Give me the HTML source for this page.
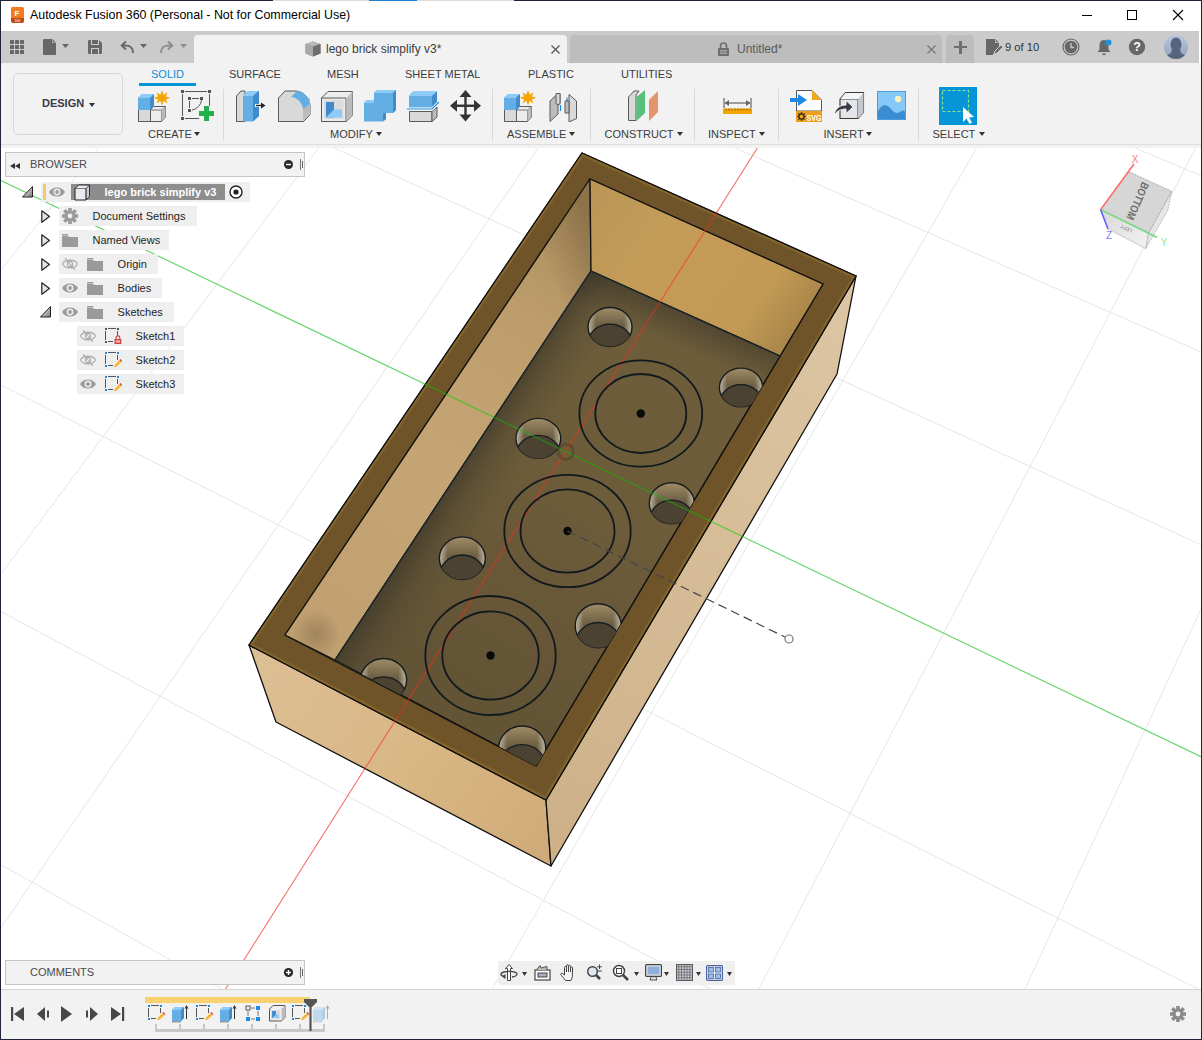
<!DOCTYPE html>
<html><head><meta charset="utf-8"><style>*{margin:0;padding:0;box-sizing:border-box}
html,body{width:1202px;height:1040px;overflow:hidden;background:#fff;font-family:"Liberation Sans",sans-serif;position:relative}
.a{position:absolute;display:block}
.t{position:absolute;white-space:nowrap;line-height:1}
#frame{position:absolute;left:0;top:0;width:1202px;height:1040px;border:1px solid #1e2538;pointer-events:none}
</style></head><body>
<svg class="a" style="left:0;top:0" width="1202" height="1040" viewBox="0 0 1202 1040">
<defs><clipPath id="vp"><rect x="1" y="148" width="1200" height="841"/></clipPath>

<linearGradient id="gLeft" x1="249" y1="644" x2="551" y2="866" gradientUnits="userSpaceOnUse">
<stop offset="0" stop-color="#dcbf95"/><stop offset="0.5" stop-color="#d9b886"/><stop offset="1" stop-color="#cfaa78"/></linearGradient>
<linearGradient id="gRight" x1="560" y1="860" x2="850" y2="300" gradientUnits="userSpaceOnUse">
<stop offset="0" stop-color="#cdb088"/><stop offset="0.5" stop-color="#d5bc96"/><stop offset="1" stop-color="#dcc5a3"/></linearGradient>
<linearGradient id="gBR" x1="590" y1="180" x2="800" y2="330" gradientUnits="userSpaceOnUse">
<stop offset="0" stop-color="#b99556"/><stop offset="0.35" stop-color="#c49c58"/><stop offset="0.8" stop-color="#c29a55"/><stop offset="1" stop-color="#a88548"/></linearGradient>
<linearGradient id="gBL" x1="590" y1="200" x2="300" y2="640" gradientUnits="userSpaceOnUse">
<stop offset="0" stop-color="#a98b5b"/><stop offset="0.25" stop-color="#bd9d6c"/><stop offset="0.6" stop-color="#c6a575"/><stop offset="1" stop-color="#c09f70"/></linearGradient>
<linearGradient id="gBLcorner" x1="590" y1="230" x2="540" y2="250" gradientUnits="userSpaceOnUse"><stop offset="0" stop-color="#5a4528" stop-opacity="0.35"/><stop offset="1" stop-color="#5a4528" stop-opacity="0"/></linearGradient>
<radialGradient id="gBLspot" cx="316" cy="634" r="24" gradientUnits="userSpaceOnUse"><stop offset="0" stop-color="#5a4a30" stop-opacity="0.32"/><stop offset="1" stop-color="#5a4a30" stop-opacity="0"/></radialGradient>
<linearGradient id="gFloor" x1="500" y1="700" x2="720" y2="330" gradientUnits="userSpaceOnUse">
<stop offset="0" stop-color="#635436"/><stop offset="0.5" stop-color="#6d5c3a"/><stop offset="1" stop-color="#6e5d3b"/></linearGradient>
<linearGradient id="gFsh1" x1="463" y1="465.5" x2="505" y2="493" gradientUnits="userSpaceOnUse">
<stop offset="0" stop-color="#2e2c24" stop-opacity="0.5"/><stop offset="0.45" stop-color="#2e2c24" stop-opacity="0.18"/><stop offset="1" stop-color="#2e2c24" stop-opacity="0"/></linearGradient>
<linearGradient id="gFsh2" x1="685.5" y1="313.5" x2="672" y2="345" gradientUnits="userSpaceOnUse">
<stop offset="0" stop-color="#2e2c24" stop-opacity="0.45"/><stop offset="1" stop-color="#2e2c24" stop-opacity="0"/></linearGradient>
<linearGradient id="gHoleWall" x1="0" y1="0" x2="0" y2="1"><stop offset="0" stop-color="#a08c66"/><stop offset="0.45" stop-color="#6d5f44"/><stop offset="1" stop-color="#6f6146"/></linearGradient>
<linearGradient id="gHoleEdge" x1="0" y1="0" x2="1" y2="0"><stop offset="0" stop-color="#dcd6c4" stop-opacity="0.75"/><stop offset="0.18" stop-color="#dcd6c4" stop-opacity="0"/><stop offset="0.82" stop-color="#dcd6c4" stop-opacity="0"/><stop offset="1" stop-color="#dcd6c4" stop-opacity="0.75"/></linearGradient>
<radialGradient id="gOrig" cx="566" cy="452" r="10" gradientUnits="userSpaceOnUse"><stop offset="0" stop-color="#4a4030" stop-opacity="0.7"/><stop offset="0.7" stop-color="#4a4030" stop-opacity="0.6"/><stop offset="1" stop-color="#4a4030" stop-opacity="0"/></radialGradient>
</defs>
<g clip-path="url(#vp)">
<g stroke="#e6e6e6" stroke-width="1" fill="none">
<line x1="98.8" y1="148.0" x2="1.0" y2="269.9"/>
<line x1="318.5" y1="148.0" x2="1.0" y2="573.8"/>
<line x1="538.0" y1="148.0" x2="1.0" y2="927.5"/>
<line x1="757.4" y1="148.0" x2="225.5" y2="989.0"/>
<line x1="976.6" y1="148.0" x2="492.3" y2="989.0"/>
<line x1="1195.6" y1="148.0" x2="758.8" y2="989.0"/>
<line x1="1201.0" y1="609.0" x2="1025.0" y2="989.0"/>
<line x1="1134.8" y1="148.0" x2="1201.0" y2="175.7"/>
<line x1="734.9" y1="148.0" x2="1201.0" y2="352.0"/>
<line x1="334.4" y1="148.0" x2="1201.0" y2="544.8"/>
<line x1="1.0" y1="180.5" x2="1201.0" y2="756.7"/>
<line x1="1.0" y1="384.9" x2="1198.0" y2="989.0"/>
<line x1="1.0" y1="611.7" x2="710.3" y2="989.0"/>
<line x1="1.0" y1="864.8" x2="221.9" y2="989.0"/>
</g>
<g stroke="#111" stroke-width="1.3" stroke-linejoin="round">
<polygon points="249,645 546,800 551,866 276,722" fill="url(#gLeft)"/>
<polygon points="546,800 856,276 837,374 551,866" fill="url(#gRight)"/>
<path fill-rule="evenodd" fill="#6e5428" d="M582,153 L856,276 L546,800 L249,645 Z M590,179 L285,635 L536,766 L823,284 Z"/>
<clipPath id="rimclip"><polygon points="582,153 856,276 546,800 249,645"/></clipPath>
<g clip-path="url(#rimclip)" fill="none" stroke="#a07c34" stroke-linejoin="miter"><polygon points="582,153 856,276 546,800 249,645" stroke-width="6" stroke-opacity="0.35"/><polygon points="582,153 856,276 546,800 249,645" stroke-width="3" stroke-opacity="0.5"/></g>
<polygon points="582,153 856,276 546,800 249,645" fill="none" stroke="#111" stroke-width="1.3"/>
<polygon points="285,635 590,179 591,271 335,660" fill="url(#gBL)"/>
<polygon points="285,635 590,179 591,271 335,660" fill="url(#gBLspot)" stroke="none"/>
<polygon points="285,635 590,179 591,271 335,660" fill="url(#gBLcorner)" stroke="none"/>
<polygon points="590,179 823,284 780,356 591,271" fill="url(#gBR)"/>
<polygon points="591,271 780,356 536,766 335,660" fill="url(#gFloor)"/>
<polygon points="591,271 780,356 536,766 335,660" fill="url(#gFsh1)" stroke="none"/>
<polygon points="591,271 780,356 536,766 335,660" fill="url(#gFsh2)" stroke="none"/>
<path d="M335,660 L591,271 L780,356" fill="none" stroke="#1c2a30" stroke-width="1.2"/>
</g>
<clipPath id="floorclip"><polygon points="591,271 780,356 536,766 335,660"/></clipPath>
<g clip-path="url(#floorclip)">
<ellipse cx="610" cy="327" rx="22" ry="19.5" fill="url(#gHoleWall)"/>
<ellipse cx="610" cy="327" rx="22" ry="19.5" fill="url(#gHoleEdge)" stroke="#141c20" stroke-width="1.4"/>
<clipPath id="hc610"><ellipse cx="610" cy="327" rx="22" ry="19.5"/></clipPath>
<ellipse clip-path="url(#hc610)" cx="610" cy="343.6" rx="22" ry="19.5" fill="#4b4232" stroke="#141c20" stroke-width="1.3"/>
<ellipse cx="741" cy="387.5" rx="21.6" ry="19.4" fill="url(#gHoleWall)"/>
<ellipse cx="741" cy="387.5" rx="21.6" ry="19.4" fill="url(#gHoleEdge)" stroke="#141c20" stroke-width="1.4"/>
<clipPath id="hc741"><ellipse cx="741" cy="387.5" rx="21.6" ry="19.4"/></clipPath>
<ellipse clip-path="url(#hc741)" cx="741" cy="404.0" rx="21.6" ry="19.4" fill="#4b4232" stroke="#141c20" stroke-width="1.3"/>
<ellipse cx="538.3" cy="438.4" rx="22.4" ry="20" fill="url(#gHoleWall)"/>
<ellipse cx="538.3" cy="438.4" rx="22.4" ry="20" fill="url(#gHoleEdge)" stroke="#141c20" stroke-width="1.4"/>
<clipPath id="hc538"><ellipse cx="538.3" cy="438.4" rx="22.4" ry="20"/></clipPath>
<ellipse clip-path="url(#hc538)" cx="538.3" cy="455.4" rx="22.4" ry="20" fill="#4b4232" stroke="#141c20" stroke-width="1.3"/>
<ellipse cx="671.8" cy="503.3" rx="22.5" ry="20.5" fill="url(#gHoleWall)"/>
<ellipse cx="671.8" cy="503.3" rx="22.5" ry="20.5" fill="url(#gHoleEdge)" stroke="#141c20" stroke-width="1.4"/>
<clipPath id="hc671"><ellipse cx="671.8" cy="503.3" rx="22.5" ry="20.5"/></clipPath>
<ellipse clip-path="url(#hc671)" cx="671.8" cy="520.7" rx="22.5" ry="20.5" fill="#4b4232" stroke="#141c20" stroke-width="1.3"/>
<ellipse cx="462.3" cy="558.2" rx="23" ry="21.3" fill="url(#gHoleWall)"/>
<ellipse cx="462.3" cy="558.2" rx="23" ry="21.3" fill="url(#gHoleEdge)" stroke="#141c20" stroke-width="1.4"/>
<clipPath id="hc462"><ellipse cx="462.3" cy="558.2" rx="23" ry="21.3"/></clipPath>
<ellipse clip-path="url(#hc462)" cx="462.3" cy="576.3" rx="23" ry="21.3" fill="#4b4232" stroke="#141c20" stroke-width="1.3"/>
<ellipse cx="598.2" cy="625.8" rx="23" ry="22" fill="url(#gHoleWall)"/>
<ellipse cx="598.2" cy="625.8" rx="23" ry="22" fill="url(#gHoleEdge)" stroke="#141c20" stroke-width="1.4"/>
<clipPath id="hc598"><ellipse cx="598.2" cy="625.8" rx="23" ry="22"/></clipPath>
<ellipse clip-path="url(#hc598)" cx="598.2" cy="644.5" rx="23" ry="22" fill="#4b4232" stroke="#141c20" stroke-width="1.3"/>
<ellipse cx="383.6" cy="680" rx="23" ry="21.5" fill="url(#gHoleWall)"/>
<ellipse cx="383.6" cy="680" rx="23" ry="21.5" fill="url(#gHoleEdge)" stroke="#141c20" stroke-width="1.4"/>
<clipPath id="hc383"><ellipse cx="383.6" cy="680" rx="23" ry="21.5"/></clipPath>
<ellipse clip-path="url(#hc383)" cx="383.6" cy="698.3" rx="23" ry="21.5" fill="#4b4232" stroke="#141c20" stroke-width="1.3"/>
<ellipse cx="522.2" cy="748" rx="23.5" ry="22" fill="url(#gHoleWall)"/>
<ellipse cx="522.2" cy="748" rx="23.5" ry="22" fill="url(#gHoleEdge)" stroke="#141c20" stroke-width="1.4"/>
<clipPath id="hc522"><ellipse cx="522.2" cy="748" rx="23.5" ry="22"/></clipPath>
<ellipse clip-path="url(#hc522)" cx="522.2" cy="766.7" rx="23.5" ry="22" fill="#4b4232" stroke="#141c20" stroke-width="1.3"/>
</g>
<line x1="757.4" y1="148.0" x2="225.5" y2="989.0" stroke="#ff2a1a" stroke-opacity="0.62" stroke-width="1.1"/>
<line x1="1.0" y1="180.5" x2="1201.0" y2="756.7" stroke="#00c800" stroke-opacity="0.55" stroke-width="1.2"/>
<g fill="none" stroke="#101a1e" stroke-width="1.8">
<ellipse cx="640.8" cy="413.5" rx="61.4" ry="53.2"/>
<ellipse cx="640.8" cy="413.5" rx="45.5" ry="39.5"/>
<ellipse cx="567.5" cy="531" rx="63.2" ry="56.2"/>
<ellipse cx="567.5" cy="531" rx="47" ry="41.7"/>
<ellipse cx="490.5" cy="655.5" rx="65.2" ry="59.5"/>
<ellipse cx="490.5" cy="655.5" rx="48.2" ry="44.2"/>
</g>
<circle cx="640.8" cy="413.5" r="4.2" fill="#0a0a0a"/>
<circle cx="567.5" cy="531" r="4.2" fill="#0a0a0a"/>
<circle cx="490.5" cy="655.5" r="4.2" fill="#0a0a0a"/>
<line x1="567.5" y1="531" x2="785.5" y2="637.3" stroke="#444" stroke-width="1.2" stroke-dasharray="9,5"/>
<circle cx="789" cy="639" r="4" fill="#fff" stroke="#777" stroke-width="1.2"/>
<circle cx="565.8" cy="451.8" r="7.6" fill="none" stroke="#4a3e2a" stroke-opacity="0.55" stroke-width="2.6"/>
</g></svg>
<svg class="a" style="left:0;top:0" width="1202" height="1040">
<defs><linearGradient id="vcf" x1="0" y1="0" x2="1" y2="1"><stop offset="0" stop-color="#d8d8d8"/><stop offset="1" stop-color="#f2f2f2"/></linearGradient></defs>
<polygon points="1100.6,209.6 1148.7,232.7 1145.8,248.6 1108,229" fill="url(#vcf)" stroke="#888" stroke-width="0.6" stroke-dasharray="2,1"/>
<polygon points="1148.7,232.7 1171.7,191.3 1168,210 1145.8,248.6" fill="#e6e6e6" stroke="#999" stroke-width="0.6" stroke-dasharray="2,1"/>
<polygon points="1100.6,209.6 1128.5,171.6 1171.7,191.3 1148.7,232.7" fill="#d6d6d6" stroke="#888" stroke-width="0.6" stroke-dasharray="2,1"/>
<text x="0" y="0" transform="translate(1134.2,199.5) rotate(114)" font-family="Liberation Sans" font-weight="bold" font-size="11" fill="#6e6e6e" text-anchor="middle" textLength="40" lengthAdjust="spacingAndGlyphs">BOTTOM</text>
<text x="0" y="0" transform="translate(1127,227) rotate(-155)" font-family="Liberation Sans" font-size="5" fill="#777" text-anchor="middle">LEFT</text>
<line x1="1100.6" y1="209.6" x2="1134" y2="164" stroke="#ff6a6a" stroke-width="1.6"/>
<line x1="1100.6" y1="209.6" x2="1157" y2="237.5" stroke="#7ada7a" stroke-width="1.6"/>
<line x1="1100.6" y1="209.6" x2="1108" y2="229" stroke="#6666ff" stroke-width="1.6"/>
<text x="1135" y="163" font-family="Liberation Sans" font-size="10" fill="#ff7a7a" text-anchor="middle">X</text>
<text x="1164" y="246" font-family="Liberation Sans" font-size="10" fill="#8de88d" text-anchor="middle">Y</text>
<text x="1109" y="239" font-family="Liberation Sans" font-size="10" fill="#8080ff" text-anchor="middle">Z</text>
</svg>
<div class="a" style="left:5px;top:152px;width:300px;height:25px;background:#f2f2f2;border:1px solid #c6c6c6;box-sizing:border-box"></div>
<svg class="a" style="left:10px;top:163px" width="11" height="6" viewBox="0 0 11 6"><polygon points="0,3 5,0 5,6" fill="#333"/><polygon points="5,3 10,0 10,6" fill="#333"/></svg>
<div class="t" style="left:30px;top:158.71px;font-size:11px;color:#4a4a4a;">BROWSER</div>
<svg class="a" style="left:283px;top:159px" width="11" height="11" viewBox="0 0 11 11"><circle cx="5.5" cy="5.5" r="4.5" fill="#2a2a2a"/><rect x="3" y="4.8" width="5" height="1.4" fill="#fff"/></svg>
<div class="a" style="left:300px;top:159px;width:1px;height:11px;background:#777;"></div>
<div class="a" style="left:302px;top:161px;width:1px;height:7px;background:#666;"></div>
<div class="a" style="left:41px;top:182px;width:209px;height:20px;background:#efefef;"></div>
<svg class="a" style="left:22px;top:186px" width="12" height="12" viewBox="0 0 12 12"><defs><linearGradient id="tg" x1="0" y1="0" x2="1" y2="1"><stop offset="0" stop-color="#fff"/><stop offset="1" stop-color="#777"/></linearGradient></defs><path d="M0.5,11 L10.5,0.5 V11z" fill="url(#tg)" stroke="#222" stroke-width="1" stroke-linejoin="round"/></svg>
<div class="a" style="left:43px;top:184px;width:3px;height:16px;background:#f9c86a;"></div>
<svg class="a" style="left:49px;top:186px" width="16" height="12" viewBox="0 0 16 12"><path d="M0,6 C3,0 13,0 16,6 C13,12 3,12 0,6z" fill="#9c9c9c"/><circle cx="8" cy="6" r="3.4" fill="#eeeeee"/><circle cx="8" cy="6" r="1.9" fill="#9c9c9c"/></svg>
<div class="a" style="left:71px;top:184px;width:154px;height:16px;background:#8d8d8d;"></div>
<svg class="a" style="left:74px;top:184px" width="17" height="17" viewBox="0 0 17 17"><path d="M1,4.5 L4.5,1 H15.5 V12.5 L12,16 H1z" fill="#e8eaf0" stroke="#222" stroke-width="1"/><path d="M12,4.5 L15.5,1 V12.5 L12,16z" fill="#c8ccd4" stroke="#222" stroke-width="0.8"/><path d="M1,4.5 H12 V16" fill="none" stroke="#333" stroke-width="0.6"/></svg>
<div class="t" style="left:104.5px;top:186.71px;font-size:11px;color:#fff;font-weight:bold;">lego brick simplify v3</div>
<svg class="a" style="left:229px;top:185px" width="14" height="14" viewBox="0 0 14 14"><circle cx="7" cy="7" r="6" fill="#fff" stroke="#222" stroke-width="1.4"/><circle cx="7" cy="7" r="2.6" fill="#222"/></svg>
<div class="a" style="left:59px;top:206px;width:138px;height:20px;background:#efefef;"></div>
<svg class="a" style="left:41px;top:209.5px" width="10" height="13" viewBox="0 0 10 13"><path d="M0.8,0.8 L8.5,6.5 L0.8,12.2z" fill="#e4e4e4" stroke="#222" stroke-width="1.2" stroke-linejoin="round"/></svg>
<svg class="a" style="left:62px;top:208px" width="16" height="16" viewBox="0 0 16 16"><g fill="#9a9a9a" transform="translate(8,8)"><rect x="-1.8" y="-8" width="3.6" height="4" transform="rotate(0)"/><rect x="-1.8" y="-8" width="3.6" height="4" transform="rotate(45)"/><rect x="-1.8" y="-8" width="3.6" height="4" transform="rotate(90)"/><rect x="-1.8" y="-8" width="3.6" height="4" transform="rotate(135)"/><rect x="-1.8" y="-8" width="3.6" height="4" transform="rotate(180)"/><rect x="-1.8" y="-8" width="3.6" height="4" transform="rotate(225)"/><rect x="-1.8" y="-8" width="3.6" height="4" transform="rotate(270)"/><rect x="-1.8" y="-8" width="3.6" height="4" transform="rotate(315)"/><circle r="5.6"/></g><circle cx="8" cy="8" r="2.4" fill="#efefef"/></svg>
<div class="t" style="left:92.5px;top:210.71px;font-size:11px;color:#1e1e1e;">Document Settings</div>
<div class="a" style="left:59px;top:230px;width:110px;height:20px;background:#efefef;"></div>
<svg class="a" style="left:41px;top:233.5px" width="10" height="13" viewBox="0 0 10 13"><path d="M0.8,0.8 L8.5,6.5 L0.8,12.2z" fill="#e4e4e4" stroke="#222" stroke-width="1.2" stroke-linejoin="round"/></svg>
<svg class="a" style="left:62px;top:233.5px" width="16" height="13" viewBox="0 0 16 13"><path d="M0,1.5 H6 L7,3 H16 V13 H0z" fill="#9a9a9a"/><rect x="0" y="0" width="6" height="1" fill="#9a9a9a"/></svg>
<div class="t" style="left:92.5px;top:234.71px;font-size:11px;color:#1e1e1e;">Named Views</div>
<div class="a" style="left:59px;top:254px;width:99px;height:20px;background:#efefef;"></div>
<svg class="a" style="left:41px;top:257.5px" width="10" height="13" viewBox="0 0 10 13"><path d="M0.8,0.8 L8.5,6.5 L0.8,12.2z" fill="#e4e4e4" stroke="#222" stroke-width="1.2" stroke-linejoin="round"/></svg>
<svg class="a" style="left:62px;top:258px" width="16" height="12" viewBox="0 0 16 12"><path d="M0.5,6 C3,0.8 13,0.8 15.5,6 C13,11.2 3,11.2 0.5,6z" fill="none" stroke="#aaaaaa" stroke-width="1.1"/><circle cx="8" cy="6" r="2.6" fill="none" stroke="#aaaaaa" stroke-width="1.1"/><path d="M3,0 L13,12" stroke="#aaaaaa" stroke-width="1.1"/></svg>
<svg class="a" style="left:87px;top:257.5px" width="16" height="13" viewBox="0 0 16 13"><path d="M0,1.5 H6 L7,3 H16 V13 H0z" fill="#9a9a9a"/><rect x="0" y="0" width="6" height="1" fill="#9a9a9a"/></svg>
<div class="t" style="left:117.6px;top:258.71px;font-size:11px;color:#1e1e1e;">Origin</div>
<div class="a" style="left:59px;top:278px;width:103px;height:20px;background:#efefef;"></div>
<svg class="a" style="left:41px;top:281.5px" width="10" height="13" viewBox="0 0 10 13"><path d="M0.8,0.8 L8.5,6.5 L0.8,12.2z" fill="#e4e4e4" stroke="#222" stroke-width="1.2" stroke-linejoin="round"/></svg>
<svg class="a" style="left:62px;top:282px" width="16" height="12" viewBox="0 0 16 12"><path d="M0,6 C3,0 13,0 16,6 C13,12 3,12 0,6z" fill="#9c9c9c"/><circle cx="8" cy="6" r="3.4" fill="#eeeeee"/><circle cx="8" cy="6" r="1.9" fill="#9c9c9c"/></svg>
<svg class="a" style="left:87px;top:281.5px" width="16" height="13" viewBox="0 0 16 13"><path d="M0,1.5 H6 L7,3 H16 V13 H0z" fill="#9a9a9a"/><rect x="0" y="0" width="6" height="1" fill="#9a9a9a"/></svg>
<div class="t" style="left:117.6px;top:282.71px;font-size:11px;color:#1e1e1e;">Bodies</div>
<div class="a" style="left:59px;top:302px;width:115px;height:20px;background:#efefef;"></div>
<svg class="a" style="left:40px;top:306px" width="12" height="12" viewBox="0 0 12 12"><defs><linearGradient id="tg" x1="0" y1="0" x2="1" y2="1"><stop offset="0" stop-color="#fff"/><stop offset="1" stop-color="#777"/></linearGradient></defs><path d="M0.5,11 L10.5,0.5 V11z" fill="url(#tg)" stroke="#222" stroke-width="1" stroke-linejoin="round"/></svg>
<svg class="a" style="left:62px;top:306px" width="16" height="12" viewBox="0 0 16 12"><path d="M0,6 C3,0 13,0 16,6 C13,12 3,12 0,6z" fill="#9c9c9c"/><circle cx="8" cy="6" r="3.4" fill="#eeeeee"/><circle cx="8" cy="6" r="1.9" fill="#9c9c9c"/></svg>
<svg class="a" style="left:87px;top:305.5px" width="16" height="13" viewBox="0 0 16 13"><path d="M0,1.5 H6 L7,3 H16 V13 H0z" fill="#9a9a9a"/><rect x="0" y="0" width="6" height="1" fill="#9a9a9a"/></svg>
<div class="t" style="left:117.6px;top:306.71px;font-size:11px;color:#1e1e1e;">Sketches</div>
<div class="a" style="left:77px;top:326px;width:107px;height:20px;background:#efefef;"></div>
<svg class="a" style="left:80px;top:330px" width="16" height="12" viewBox="0 0 16 12"><path d="M0.5,6 C3,0.8 13,0.8 15.5,6 C13,11.2 3,11.2 0.5,6z" fill="none" stroke="#aaaaaa" stroke-width="1.1"/><circle cx="8" cy="6" r="2.6" fill="none" stroke="#aaaaaa" stroke-width="1.1"/><path d="M3,0 L13,12" stroke="#aaaaaa" stroke-width="1.1"/></svg>
<svg class="a" style="left:105px;top:328px" width="17" height="17" viewBox="0 0 17 17"><g fill="#555"><rect x="0" y="0" width="2" height="2"/><rect x="12" y="0" width="2" height="2"/><rect x="0" y="13" width="2" height="2"/></g><path d="M3,0.5 H11 M0.5,3 V12 M12.5,3 V8 M3,13.5 H8" stroke="#555" stroke-width="1" fill="none"/><path d="M11,11 V9.8 a1.9,1.9 0 0 1 3.8,0 V11" fill="none" stroke="#d43a3a" stroke-width="1.1"/><rect x="9.5" y="11" width="6.8" height="5" fill="#d43a3a"/><rect x="10.7" y="12.2" width="4.4" height="2.6" fill="#f3b0b0"/></svg>
<div class="t" style="left:135.6px;top:330.71px;font-size:11px;color:#1e1e1e;">Sketch1</div>
<div class="a" style="left:77px;top:350px;width:107px;height:20px;background:#efefef;"></div>
<svg class="a" style="left:80px;top:354px" width="16" height="12" viewBox="0 0 16 12"><path d="M0.5,6 C3,0.8 13,0.8 15.5,6 C13,11.2 3,11.2 0.5,6z" fill="none" stroke="#aaaaaa" stroke-width="1.1"/><circle cx="8" cy="6" r="2.6" fill="none" stroke="#aaaaaa" stroke-width="1.1"/><path d="M3,0 L13,12" stroke="#aaaaaa" stroke-width="1.1"/></svg>
<svg class="a" style="left:105px;top:352px" width="17" height="17" viewBox="0 0 17 17"><g fill="#1e88e5"><rect x="0" y="0" width="2" height="2"/><rect x="12" y="0" width="2" height="2"/><rect x="0" y="13" width="2" height="2"/></g><path d="M3,0.5 H11 M0.5,3 V12 M12.5,3 V8 M3,13.5 H8" stroke="#555" stroke-width="1" fill="none"/><path d="M9,15.5 L10,12.5 L14.5,8 L16.5,10 L12,14.5z" fill="#f6b73c"/><path d="M14.5,8 L15.5,7 L17,8.5 L16.5,10z" fill="#e03a3a"/></svg>
<div class="t" style="left:135.6px;top:354.71px;font-size:11px;color:#1e1e1e;">Sketch2</div>
<div class="a" style="left:77px;top:374px;width:107px;height:20px;background:#efefef;"></div>
<svg class="a" style="left:80px;top:378px" width="16" height="12" viewBox="0 0 16 12"><path d="M0,6 C3,0 13,0 16,6 C13,12 3,12 0,6z" fill="#9c9c9c"/><circle cx="8" cy="6" r="3.4" fill="#eeeeee"/><circle cx="8" cy="6" r="1.9" fill="#9c9c9c"/></svg>
<svg class="a" style="left:105px;top:376px" width="17" height="17" viewBox="0 0 17 17"><g fill="#1e88e5"><rect x="0" y="0" width="2" height="2"/><rect x="12" y="0" width="2" height="2"/><rect x="0" y="13" width="2" height="2"/></g><path d="M3,0.5 H11 M0.5,3 V12 M12.5,3 V8 M3,13.5 H8" stroke="#555" stroke-width="1" fill="none"/><path d="M9,15.5 L10,12.5 L14.5,8 L16.5,10 L12,14.5z" fill="#f6b73c"/><path d="M14.5,8 L15.5,7 L17,8.5 L16.5,10z" fill="#e03a3a"/></svg>
<div class="t" style="left:135.6px;top:378.71px;font-size:11px;color:#1e1e1e;">Sketch3</div>
<div class="a" style="left:5px;top:960px;width:300px;height:25px;background:#f2f2f2;border:1px solid #c6c6c6;box-sizing:border-box"></div>
<div class="t" style="left:30px;top:966.71px;font-size:11px;color:#4a4a4a;">COMMENTS</div>
<svg class="a" style="left:283px;top:967px" width="11" height="11" viewBox="0 0 11 11"><circle cx="5.5" cy="5.5" r="4.6" fill="#2a2a2a"/><rect x="3" y="4.8" width="5" height="1.4" fill="#fff"/><rect x="4.8" y="3" width="1.4" height="5" fill="#fff"/></svg>
<div class="a" style="left:300px;top:967px;width:1px;height:11px;background:#777;"></div>
<div class="a" style="left:302px;top:969px;width:1px;height:7px;background:#666;"></div>
<div class="a" style="left:498px;top:961px;width:237px;height:24px;background:#efefef;"></div>
<svg class="a" style="left:500px;top:964px" width="18" height="18" viewBox="0 0 18 18"><path d="M9,0.5 L5.5,4.5 H7.5 V16.5 H10.5 V4.5 H12.5z" fill="#fff" stroke="#444" stroke-width="1"/><path d="M4,12.5 C0,11.5 0,9 4,8 C8,7 14,7 16.5,9 C18,10.5 16,12.5 12,13" fill="none" stroke="#444" stroke-width="1.3"/><polygon points="2,12.5 5.5,10 5.5,15" fill="#444"/></svg>
<svg class="a" style="left:522px;top:972px" width="5" height="4" viewBox="0 0 5 4"><polygon points="0,0 5,0 2.5,4" fill="#333"/></svg>
<svg class="a" style="left:534px;top:964px" width="17" height="17" viewBox="0 0 17 17"><rect x="1" y="6" width="15" height="10" fill="#fff" stroke="#444" stroke-width="1.2"/><rect x="4" y="9" width="9" height="4" fill="#a9b1c0" stroke="#444" stroke-width="1"/><path d="M2.5,6 L6,1.5 L7,4 L13,2.5 V6" fill="#bbb" stroke="#444" stroke-width="0.9"/></svg>
<svg class="a" style="left:560px;top:964px" width="17" height="17" viewBox="0 0 17 17"><path d="M5.5,16.5 C4,14 1.5,12 0.8,10.5 C0.3,9.5 1.8,8.8 3,9.8 L4.5,11 V3.5 a1,1 0 0 1 2,0 V8 V1.8 a1,1 0 0 1 2,0 V8 V2.3 a1,1 0 0 1 2,0 V8 V4 a1,1 0 0 1 2,0 V10.5 C12.5,13.5 11.5,15 11,16.5z" fill="#f4f4f4" stroke="#444" stroke-width="1"/></svg>
<svg class="a" style="left:586px;top:964px" width="17" height="17" viewBox="0 0 17 17"><circle cx="6.5" cy="7.5" r="4.8" fill="#dfe8f0" stroke="#444" stroke-width="1.4"/><path d="M10,11 L14,15" stroke="#444" stroke-width="2.6"/><path d="M13.5,0.5 V5 M11.2,2.8 H15.8 M11.2,7 H15.8" stroke="#444" stroke-width="1"/></svg>
<svg class="a" style="left:612px;top:964px" width="17" height="17" viewBox="0 0 17 17"><circle cx="7" cy="7" r="5.5" fill="#fff" stroke="#444" stroke-width="1.5"/><rect x="4.5" y="4.5" width="5" height="5" fill="none" stroke="#444" stroke-width="1"/><path d="M11,11 L16,16" stroke="#444" stroke-width="2.5"/></svg>
<svg class="a" style="left:634px;top:972px" width="5" height="4" viewBox="0 0 5 4"><polygon points="0,0 5,0 2.5,4" fill="#333"/></svg>
<svg class="a" style="left:645px;top:964px" width="17" height="17" viewBox="0 0 17 17"><rect x="0.6" y="0.6" width="15.8" height="11.8" rx="1" fill="#e8e8e8" stroke="#444" stroke-width="1.2"/><rect x="2.5" y="2.5" width="12" height="8" fill="#8fb0dc"/><path d="M6,13 L5,16 H12 L11,13" fill="#ddd" stroke="#444" stroke-width="0.9"/></svg>
<svg class="a" style="left:664px;top:972px" width="5" height="4" viewBox="0 0 5 4"><polygon points="0,0 5,0 2.5,4" fill="#333"/></svg>
<svg class="a" style="left:676px;top:964px" width="17" height="17" viewBox="0 0 17 17"><rect x="0.5" y="0.5" width="16" height="16" fill="#c9cbd3" stroke="#555" stroke-width="1"/><path d="M2.75,0 V17 M0,2.75 H17" stroke="#6a6a70" stroke-width="0.8"/><path d="M5.50,0 V17 M0,5.50 H17" stroke="#6a6a70" stroke-width="0.8"/><path d="M8.25,0 V17 M0,8.25 H17" stroke="#6a6a70" stroke-width="0.8"/><path d="M11.00,0 V17 M0,11.00 H17" stroke="#6a6a70" stroke-width="0.8"/><path d="M13.75,0 V17 M0,13.75 H17" stroke="#6a6a70" stroke-width="0.8"/></svg>
<svg class="a" style="left:696px;top:972px" width="5" height="4" viewBox="0 0 5 4"><polygon points="0,0 5,0 2.5,4" fill="#333"/></svg>
<svg class="a" style="left:706px;top:965px" width="17" height="16" viewBox="0 0 17 16"><rect x="0.6" y="0.6" width="15.8" height="14.8" rx="1" fill="#e6ecf6" stroke="#4a64a0" stroke-width="1.2"/><g fill="#9ebde8" stroke="#4a64a0" stroke-width="0.8"><rect x="2.5" y="2.5" width="5" height="4.5"/><rect x="9.5" y="2.5" width="5" height="4.5"/><rect x="2.5" y="9" width="5" height="4.5"/><rect x="9.5" y="9" width="5" height="4.5"/></g></svg>
<svg class="a" style="left:727px;top:972px" width="5" height="4" viewBox="0 0 5 4"><polygon points="0,0 5,0 2.5,4" fill="#333"/></svg>
<div class="a" style="left:0px;top:0px;width:1202px;height:31px;background:#fff;"></div>
<svg class="a" style="left:10px;top:7px" width="15" height="17" viewBox="0 0 15 17">
<rect x="1" y="1" width="13" height="15" rx="2" fill="#b84a12"/>
<path d="M2,0 h10 a2,2 0 0 1 2,2 v9 h-13 v-9 a2,2 0 0 1 1,-2z" fill="#f47a20"/>
<text x="7" y="9" font-family="Liberation Sans" font-weight="bold" font-size="8" fill="#fff" text-anchor="middle">F</text>
<text x="7.5" y="15" font-family="Liberation Sans" font-weight="bold" font-size="3.5" fill="#fbd7c0" text-anchor="middle">360</text></svg>
<div class="t" style="left:30px;top:9.14px;font-size:12.4px;color:#000;">Autodesk Fusion 360 (Personal - Not for Commercial Use)</div>
<div class="a" style="left:1082px;top:15px;width:10px;height:1px;background:#000;"></div>
<div class="a" style="left:1127px;top:10px;width:10px;height:10px;background:transparent;border:1px solid #000"></div>
<svg class="a" style="left:1172px;top:9px" width="12" height="12" viewBox="0 0 12 12"><path d="M1,1 L11,11 M11,1 L1,11" stroke="#000" stroke-width="1.1"/></svg>
<div class="a" style="left:1px;top:31px;width:1198px;height:32px;background:#cbcbcb;"></div>
<svg class="a" style="left:10px;top:40px" width="14" height="14" viewBox="0 0 14 14"><rect x="0" y="0" width="4" height="4" rx="0.6" fill="#676767"/><rect x="5" y="0" width="4" height="4" rx="0.6" fill="#676767"/><rect x="10" y="0" width="4" height="4" rx="0.6" fill="#676767"/><rect x="0" y="5" width="4" height="4" rx="0.6" fill="#676767"/><rect x="5" y="5" width="4" height="4" rx="0.6" fill="#676767"/><rect x="10" y="5" width="4" height="4" rx="0.6" fill="#676767"/><rect x="0" y="10" width="4" height="4" rx="0.6" fill="#676767"/><rect x="5" y="10" width="4" height="4" rx="0.6" fill="#676767"/><rect x="10" y="10" width="4" height="4" rx="0.6" fill="#676767"/></svg>
<svg class="a" style="left:43px;top:39px" width="14" height="16" viewBox="0 0 14 16"><path d="M1,0 H9 L13,4 V15 a1,1 0 0 1 -1,1 H1 a1,1 0 0 1 -1,-1 V1 a1,1 0 0 1 1,-1z" fill="#676767"/><path d="M9,0 V4 H13" fill="#cbcbcb"/><path d="M9.6,0.3 L12.7,3.4 H9.6z" fill="#676767"/></svg>
<svg class="a" style="left:62px;top:44px" width="7" height="4" viewBox="0 0 7 4"><polygon points="0,0 7,0 3.5,4" fill="#676767"/></svg>
<svg class="a" style="left:88px;top:40px" width="14" height="14" viewBox="0 0 14 14"><path d="M1,0 H11 L14,3 V13 a1,1 0 0 1 -1,1 H1 a1,1 0 0 1 -1,-1 V1 a1,1 0 0 1 1,-1z" fill="#676767"/><path d="M3.5,0 V4.5 H10.5 V0" fill="none" stroke="#cbcbcb" stroke-width="1.1"/><path d="M3.5,14 V8.5 H10.5 V14" fill="none" stroke="#cbcbcb" stroke-width="1.1"/></svg>
<svg class="a" style="left:120px;top:40px" width="15" height="14" viewBox="0 0 15 14"><path d="M13,13 C13,7 10,5.5 5,5.5 H2.5" fill="none" stroke="#676767" stroke-width="2"/><path d="M6,1.5 L1.8,5.5 L6,9.5" fill="none" stroke="#676767" stroke-width="2"/></svg>
<svg class="a" style="left:140px;top:44px" width="7" height="4" viewBox="0 0 7 4"><polygon points="0,0 7,0 3.5,4" fill="#676767"/></svg>
<svg class="a" style="left:159px;top:40px" width="15" height="14" viewBox="0 0 15 14"><path d="M2,13 C2,7 5,5.5 10,5.5 H12.5" fill="none" stroke="#8e8e8e" stroke-width="2"/><path d="M9,1.5 L13.2,5.5 L9,9.5" fill="none" stroke="#8e8e8e" stroke-width="2"/></svg>
<svg class="a" style="left:180px;top:44px" width="7" height="4" viewBox="0 0 7 4"><polygon points="0,0 7,0 3.5,4" fill="#8e8e8e"/></svg>
<div class="a" style="left:194px;top:35px;width:373px;height:28px;background:#f2f2f2;border-radius:4px 4px 0 0"></div>
<svg class="a" style="left:305px;top:41px" width="16" height="16" viewBox="0 0 16 16"><path d="M8,0.5 L15.5,3 V12.5 L8,15.5 L0.5,12.5 V3z" fill="#8a8a8a"/><path d="M0.5,3 L8,5.5 L15.5,3 L8,0.5z" fill="#b9b9b9"/><path d="M8,5.5 V15.5 L0.5,12.5 V3z" fill="#a9a9a9"/><path d="M8,5.5 L15.5,3 V12.5 L8,15.5z" fill="#6e6e6e"/></svg>
<div class="t" style="left:326px;top:42.59px;font-size:12px;color:#3c3c3c;">lego brick simplify v3*</div>
<svg class="a" style="left:551px;top:45px" width="9" height="9" viewBox="0 0 9 9"><path d="M0.5,0.5 L8.5,8.5 M8.5,0.5 L0.5,8.5" stroke="#555" stroke-width="1.3"/></svg>
<div class="a" style="left:570px;top:35px;width:372px;height:28px;background:#bdbdbd;border-radius:4px 4px 0 0"></div>
<svg class="a" style="left:718px;top:42px" width="11" height="14" viewBox="0 0 11 14"><path d="M2.5,6 V4 a3,3 0 0 1 6,0 V6" fill="none" stroke="#6e6e6e" stroke-width="1.6"/><rect x="0" y="6" width="11" height="8" rx="1" fill="#6e6e6e"/><rect x="2" y="8.3" width="7" height="1" fill="#bdbdbd"/><rect x="2" y="10.6" width="7" height="1" fill="#bdbdbd"/></svg>
<div class="t" style="left:737px;top:42.59px;font-size:12px;color:#5a5a5a;">Untitled*</div>
<svg class="a" style="left:927px;top:45px" width="9" height="9" viewBox="0 0 9 9"><path d="M0.5,0.5 L8.5,8.5 M8.5,0.5 L0.5,8.5" stroke="#777" stroke-width="1.3"/></svg>
<div class="a" style="left:946px;top:35px;width:28px;height:28px;background:#bdbdbd;border-radius:4px 4px 0 0"></div>
<div class="a" style="left:954px;top:46px;width:13px;height:2.4px;background:#6e6e6e;"></div>
<div class="a" style="left:959.3px;top:40.7px;width:2.4px;height:13px;background:#6e6e6e;"></div>
<svg class="a" style="left:986px;top:39px" width="17" height="16" viewBox="0 0 17 16"><path d="M0,0 H9 L13,4 V9 L7,15 V16 H0z" fill="#676767"/><path d="M9,0 V4 H13" fill="#cbcbcb"/><path d="M9.8,0.5 L12.5,3.2 H9.8z" fill="#676767"/><path d="M8,15.5 L9,12 L15,6 L17,8 L11,14z" fill="#676767" stroke="#cbcbcb" stroke-width="1"/></svg>
<div class="t" style="left:1005px;top:41.68px;font-size:11.2px;color:#333;">9 of 10</div>
<svg class="a" style="left:1062px;top:38px" width="18" height="18" viewBox="0 0 18 18"><circle cx="9" cy="9" r="8" fill="none" stroke="#676767" stroke-width="1.2"/><circle cx="9" cy="9" r="6.3" fill="#676767"/><path d="M9,5 V9.5 H12" fill="none" stroke="#cbcbcb" stroke-width="1.3"/></svg>
<svg class="a" style="left:1096px;top:38px" width="16" height="18" viewBox="0 0 16 18"><path d="M8,2 C4.5,2 3.5,5 3.5,8 V11.5 L1.5,14 H14.5 L12.5,11.5 V8 C12.5,5 11.5,2 8,2z" fill="#676767"/><path d="M6,15.5 a2,1.5 0 0 0 4,0z" fill="#676767"/><circle cx="12.5" cy="4.5" r="3" fill="#1e90e0"/></svg>
<svg class="a" style="left:1128px;top:38px" width="18" height="18" viewBox="0 0 18 18"><circle cx="9" cy="9" r="8.2" fill="#676767"/><text x="9" y="13.3" font-family="Liberation Sans" font-weight="bold" font-size="12.5" fill="#fff" text-anchor="middle">?</text></svg>
<svg class="a" style="left:1163px;top:34px" width="26" height="26" viewBox="0 0 26 26"><defs><linearGradient id="av" x1="0" y1="0" x2="0" y2="1"><stop offset="0" stop-color="#b8c7dc"/><stop offset="1" stop-color="#8ea2bf"/></linearGradient><clipPath id="avc"><circle cx="13" cy="13" r="12"/></clipPath></defs><circle cx="13" cy="13" r="12" fill="url(#av)"/><g clip-path="url(#avc)" fill="#56657b"><ellipse cx="13" cy="10.5" rx="5.5" ry="7"/><path d="M9,15 L8,19 L1,23 L1,27 H25 V23 L18,19 L17,15z"/></g></svg>
<div class="a" style="left:1px;top:63px;width:1200px;height:81px;background:#f2f2f2;"></div>
<div class="a" style="left:1px;top:144px;width:1200px;height:1px;background:#dedede;"></div>
<div class="a" style="left:1px;top:145px;width:1200px;height:3px;background:#f2f2f2;"></div>
<div class="a" style="left:13px;top:73px;width:110px;height:62px;background:#f2f2f2;border:1px solid #d9d9d9;border-radius:5px;box-sizing:border-box"></div>
<div class="t" style="left:42px;top:97.71px;font-size:11px;color:#3a3a4a;font-weight:bold;">DESIGN</div>
<svg class="a" style="left:89px;top:103px" width="6" height="4" viewBox="0 0 6 4"><polygon points="0,0 6,0 3.0,4" fill="#333"/></svg>
<div class="t" style="left:151px;top:68.71px;font-size:11px;color:#0a90da;">SOLID</div>
<div class="t" style="left:229px;top:68.71px;font-size:11px;color:#3c3c3c;">SURFACE</div>
<div class="t" style="left:327px;top:68.71px;font-size:11px;color:#3c3c3c;">MESH</div>
<div class="t" style="left:405px;top:68.71px;font-size:11px;color:#3c3c3c;">SHEET METAL</div>
<div class="t" style="left:528px;top:68.71px;font-size:11px;color:#3c3c3c;">PLASTIC</div>
<div class="t" style="left:621px;top:68.71px;font-size:11px;color:#3c3c3c;">UTILITIES</div>
<div class="a" style="left:139px;top:83px;width:57px;height:3px;background:#0696d7;"></div>
<div class="t" style="left:148px;top:128.71px;font-size:11px;color:#3c3c3c;">CREATE</div>
<svg class="a" style="left:194px;top:132px" width="6" height="4" viewBox="0 0 6 4"><polygon points="0,0 6,0 3.0,4" fill="#333"/></svg>
<div class="t" style="left:330px;top:128.71px;font-size:11px;color:#3c3c3c;">MODIFY</div>
<svg class="a" style="left:376px;top:132px" width="6" height="4" viewBox="0 0 6 4"><polygon points="0,0 6,0 3.0,4" fill="#333"/></svg>
<div class="t" style="left:507px;top:128.71px;font-size:11px;color:#3c3c3c;">ASSEMBLE</div>
<svg class="a" style="left:569px;top:132px" width="6" height="4" viewBox="0 0 6 4"><polygon points="0,0 6,0 3.0,4" fill="#333"/></svg>
<div class="t" style="left:604.5px;top:128.71px;font-size:11px;color:#3c3c3c;">CONSTRUCT</div>
<svg class="a" style="left:677px;top:132px" width="6" height="4" viewBox="0 0 6 4"><polygon points="0,0 6,0 3.0,4" fill="#333"/></svg>
<div class="t" style="left:708px;top:128.71px;font-size:11px;color:#3c3c3c;">INSPECT</div>
<svg class="a" style="left:759px;top:132px" width="6" height="4" viewBox="0 0 6 4"><polygon points="0,0 6,0 3.0,4" fill="#333"/></svg>
<div class="t" style="left:823.5px;top:128.71px;font-size:11px;color:#3c3c3c;">INSERT</div>
<svg class="a" style="left:866px;top:132px" width="6" height="4" viewBox="0 0 6 4"><polygon points="0,0 6,0 3.0,4" fill="#333"/></svg>
<div class="t" style="left:932.5px;top:128.71px;font-size:11px;color:#3c3c3c;">SELECT</div>
<svg class="a" style="left:979px;top:132px" width="6" height="4" viewBox="0 0 6 4"><polygon points="0,0 6,0 3.0,4" fill="#333"/></svg>
<div class="a" style="left:223px;top:89px;width:1px;height:52px;background:#d9d9d9;"></div>
<div class="a" style="left:492px;top:89px;width:1px;height:52px;background:#d9d9d9;"></div>
<div class="a" style="left:590px;top:89px;width:1px;height:52px;background:#d9d9d9;"></div>
<div class="a" style="left:694px;top:89px;width:1px;height:52px;background:#d9d9d9;"></div>
<div class="a" style="left:778px;top:89px;width:1px;height:52px;background:#d9d9d9;"></div>
<div class="a" style="left:918px;top:89px;width:1px;height:52px;background:#d9d9d9;"></div>
<svg class="a" style="left:138px;top:90px" width="34" height="32" viewBox="0 0 34 32"><path d="M0.5,14.5 H12.5 V31.5 H0.5z" fill="#d9d9d9" stroke="#5a5a5a" stroke-width="1"/>
<path d="M12.5,20 L15.5,16.5 H27.5 V27.5 L23.5,31.5 H12.5z" fill="#ececec" stroke="#5a5a5a" stroke-width="1"/>
<path d="M23.5,20 H12.5 M23.5,20 V31.5 M23.5,20 L27.5,16.5" fill="none" stroke="#5a5a5a" stroke-width="0.8"/>
<path d="M23.5,20 L27.5,16.5 V27.5 L23.5,31.5z" fill="#bcbcbc"/>
<path d="M0,8 L4,4 H16 V16 L12,20 H0z" fill="#64aee6"/><path d="M0,8 L4,4 H16 L12,8z" fill="#8ccaf7"/><path d="M12,8 L16,4 V16 L12,20z" fill="#3f8bcc"/><polygon points="24,0 25.6,4.8 29.7,2.3 27.8,6.6 32.5,7.7 27.8,9.4 29.7,13.4 25.6,11.1 24,15.5 22.4,11.1 18.3,13.4 20.2,9.4 15.5,7.7 20.2,6.6 18.3,2.3 22.4,4.8" fill="#f7a300"/></svg>
<svg class="a" style="left:504px;top:90px" width="34" height="32" viewBox="0 0 34 32"><path d="M0.5,14.5 H12.5 V31.5 H0.5z" fill="#d9d9d9" stroke="#5a5a5a" stroke-width="1"/>
<path d="M12.5,20 L15.5,16.5 H27.5 V27.5 L23.5,31.5 H12.5z" fill="#ececec" stroke="#5a5a5a" stroke-width="1"/>
<path d="M23.5,20 H12.5 M23.5,20 V31.5 M23.5,20 L27.5,16.5" fill="none" stroke="#5a5a5a" stroke-width="0.8"/>
<path d="M23.5,20 L27.5,16.5 V27.5 L23.5,31.5z" fill="#bcbcbc"/>
<path d="M0,8 L4,4 H16 V16 L12,20 H0z" fill="#64aee6"/><path d="M0,8 L4,4 H16 L12,8z" fill="#8ccaf7"/><path d="M12,8 L16,4 V16 L12,20z" fill="#3f8bcc"/><polygon points="24,0 25.6,4.8 29.7,2.3 27.8,6.6 32.5,7.7 27.8,9.4 29.7,13.4 25.6,11.1 24,15.5 22.4,11.1 18.3,13.4 20.2,9.4 15.5,7.7 20.2,6.6 18.3,2.3 22.4,4.8" fill="#f7a300"/></svg>
<svg class="a" style="left:181px;top:90px" width="34" height="32" viewBox="0 0 34 32"><g fill="#555"><rect x="0" y="0" width="3" height="3"/><rect x="27" y="0" width="3" height="3"/><rect x="0" y="27" width="3" height="3"/><rect x="7" y="7" width="3" height="3"/><rect x="19" y="7" width="3" height="3"/><rect x="7" y="19" width="3" height="3"/></g><g stroke="#555" stroke-width="1" fill="none"><path d="M4,1.5 H26 M1.5,4 V26 M28.5,4 V16 M4,28.5 H18 M11,8.5 H18 M8.5,11 V18 M11,20 C16,19 20,15 20.5,10"/></g><path d="M23,16 H28 V21 H33 V26 H28 V31 H23 V26 H18 V21 H23z" fill="#22b04b"/></svg>
<svg class="a" style="left:236px;top:90px" width="30" height="32" viewBox="0 0 30 32"><path d="M0.5,31.5 V6 L5,1 H9 V31.5z" fill="#d9d9d9" stroke="#5a5a5a" stroke-width="1"/>
<path d="M7,31.5 V6 L12,1 H23 V26 L17,31.5z" fill="#64aee6"/><path d="M7,6 L12,1 H23 L17,6z" fill="#8ccaf7"/><path d="M17,6 L23,1 V26 L17,31.5z" fill="#3f8bcc"/>
<rect x="19" y="14" width="6" height="3" fill="#fff"/><path d="M20,15.5 H26" stroke="#222" stroke-width="1.4"/><polygon points="25,12.5 29.5,15.5 25,18.5" fill="#222"/></svg>
<svg class="a" style="left:278px;top:90px" width="33" height="32" viewBox="0 0 33 32"><path d="M0.5,31.5 V8 L7,1 H17 C25,1 32,8 32,16 V25 L25.5,31.5z" fill="#d9d9d9" stroke="#5a5a5a" stroke-width="1"/>
<path d="M25,31 V14 L32,8 V25z" fill="#bcbcbc"/>
<path d="M13,7 L19,1 C26,2 31,7 32,14 L25,19 C24,12 19,7.5 13,7z" fill="#64aee6"/></svg>
<svg class="a" style="left:321px;top:90px" width="33" height="32" viewBox="0 0 33 32"><path d="M0.5,31.5 V8 L7,1.5 H31.5 V25 L25.5,31.5z" fill="#ececec" stroke="#5a5a5a" stroke-width="1"/>
<path d="M0.5,8 H25 V31.5" fill="none" stroke="#5a5a5a" stroke-width="1"/>
<path d="M25.5,8 L31.5,1.5 V25 L25.5,31.5z" fill="#bcbcbc"/>
<rect x="3" y="10" width="19.5" height="19" fill="#dcdcdc"/>
<rect x="5" y="12" width="8" height="15.5" fill="#3f8bcc"/><path d="M5,27.5 L13,19.5 H21 V27.5z" fill="#8ccaf7"/></svg>
<svg class="a" style="left:364px;top:90px" width="32" height="32" viewBox="0 0 32 32"><path d="M0,31.5 V13 L3,10 H10 V3 L13,0 H32 V20 L29,23 H22 V29 L19,31.5z" fill="#64aee6"/>
<path d="M10,3 L13,0 H32 L29,3z M0,13 L3,10 H10 V13z" fill="#8ccaf7"/><path d="M29,3 L32,0 V20 L29,23z M19,23 L22,23 V29 L19,31.5z" fill="#3f8bcc"/></svg>
<svg class="a" style="left:407px;top:90px" width="33" height="32" viewBox="0 0 33 32"><path d="M2,6 L6,1.5 H30 V14 L25,18.5 H2z" fill="#64aee6"/><path d="M2,6 L6,1.5 H30 L25,6z" fill="#8ccaf7"/><path d="M25,6 L30,1.5 V14 L25,18.5z" fill="#3f8bcc"/>
<path d="M2.5,21.5 H25 V31.5 H2.5z" fill="#d9d9d9" stroke="#5a5a5a" stroke-width="1"/><path d="M25,21.5 L30,17 V27 L25,31.5z" fill="#bcbcbc" stroke="#5a5a5a" stroke-width="1"/>
<path d="M0,19 H25 L32,12" fill="none" stroke="#fff" stroke-width="3"/><path d="M0,19 H25 L32,12" fill="none" stroke="#1b88dd" stroke-width="1.2"/></svg>
<svg class="a" style="left:450px;top:90px" width="32" height="32" viewBox="0 0 32 32"><g fill="#333"><polygon points="15.5,0 21.5,7 9.5,7"/><polygon points="15.5,31.5 21.5,24.5 9.5,24.5"/><polygon points="0,15.75 7,9.75 7,21.75"/><polygon points="31,15.75 24,9.75 24,21.75"/><rect x="14.3" y="5" width="2.4" height="21.5"/><rect x="5" y="14.55" width="21" height="2.4"/></g></svg>
<svg class="a" style="left:549px;top:92px" width="29" height="30" viewBox="0 0 29 30"><path d="M1,26.5 V9 L9,1.5 H11 V10 C11,12 10,13 9,13 V22 L1,29.5z" fill="#bcbcbc" stroke="#5a5a5a" stroke-width="1"/>
<path d="M7,1.5 H11 V11 a2,1.5 0 0 1 -4,0z" fill="#d9d9d9" stroke="#5a5a5a" stroke-width="1"/>
<path d="M27.5,26.5 V9 L20,2.5 V30z" fill="#d9d9d9" stroke="#5a5a5a" stroke-width="1"/>
<path d="M16,10 a2,1.5 0 0 1 4,0 V21 H16z" fill="#bcbcbc" stroke="#5a5a5a" stroke-width="1"/>
<path d="M11.5,13 V19 M18,5.5 V10" stroke="#1b88dd" stroke-width="1.2"/></svg>
<svg class="a" style="left:628px;top:90px" width="31" height="32" viewBox="0 0 31 32"><path d="M0.5,30.5 V7 L6,1 H11 L8,5 V30.5z" fill="#d9d9d9" stroke="#5a5a5a" stroke-width="1"/>
<path d="M8.5,7 V31 L17,23 V0z" fill="#55c27a"/><path d="M21,31 L30,22 V1 L21,10z" fill="#e3966b"/></svg>
<svg class="a" style="left:723px;top:98px" width="29" height="16" viewBox="0 0 29 16"><path d="M1,0 V10 M28,0 V10" stroke="#666" stroke-width="1.2"/><path d="M2,5 H27" stroke="#666" stroke-width="1.2"/><polygon points="1.5,5 6,2 6,8" fill="#666"/><polygon points="27.5,5 23,2 23,8" fill="#666"/><rect x="0" y="10.5" width="29" height="5.5" fill="#f5a400"/><path d="M3,10.5 V12.5 M6,10.5 V12.5 M9,10.5 V12.5 M12,10.5 V12.5 M15,10.5 V12.5 M18,10.5 V12.5 M21,10.5 V12.5 M24,10.5 V12.5 M27,10.5 V12.5" stroke="#6a4a00" stroke-width="0.8"/></svg>
<svg class="a" style="left:790px;top:90px" width="33" height="32" viewBox="0 0 33 32"><path d="M6.5,0.5 H22 L31.5,10 V21 H6.5z" fill="#fff" stroke="#555" stroke-width="1"/><path d="M22,0.5 L31.5,10 H22z" fill="#f0a81e"/>
<polygon points="0,8 8,8 8,4 17,10 8,16 8,12 0,12" fill="#1e88e5"/>
<rect x="6" y="21" width="26" height="11" fill="#eba020"/>
<g transform="translate(11.5,26.5)"><circle r="2.6" fill="none" stroke="#222" stroke-width="1.3"/><g stroke="#222" stroke-width="1.2"><path d="M0,-4.2 V-2.8 M0,4.2 V2.8 M-4.2,0 H-2.8 M4.2,0 H2.8 M-3,-3 L-2,-2 M3,3 L2,2 M-3,3 L-2,2 M3,-3 L2,-2"/></g></g>
<text x="24" y="30.8" font-family="Liberation Sans" font-weight="bold" font-size="9.5" fill="#fff" text-anchor="middle" textLength="15" lengthAdjust="spacingAndGlyphs">SVG</text></svg>
<svg class="a" style="left:834px;top:91px" width="31" height="29" viewBox="0 0 31 29"><path d="M6,8 L11.5,1.5 H29.5 V21.5 L24,27.5 H6z" fill="#e4e5ea" stroke="#3a3a3a" stroke-width="1.1" stroke-linejoin="round"/><path d="M6,8 H24 V27.5" fill="none" stroke="#3a3a3a" stroke-width="1"/><path d="M24,8 L29.5,1.5 V21.5 L24,27.5z" fill="#c6c8d0"/><path d="M6.5,8 L11.5,2 H29 L24,8z" fill="#f4f4f6"/>
<path d="M0,24 C1.5,17 6,14 12,14 V9.5 L19,16 L12,22.5 V18 C7,18 3,20 0,24z" fill="#3a3d44" stroke="#fff" stroke-width="0.9"/></svg>
<svg class="a" style="left:877px;top:91px" width="30" height="30" viewBox="0 0 30 30"><rect x="0.5" y="0.5" width="28" height="28" fill="#86c8f7" stroke="#4a9ee0" stroke-width="1"/><circle cx="21" cy="8" r="3.2" fill="#f8f3c0"/><path d="M1,20 C5,13 9,13 13,17 C16,20 19,24 23,21 C25,19 27,19 28,21 V28 H1z" fill="#3b8cd0"/></svg>
<svg class="a" style="left:939px;top:87px" width="38" height="38" viewBox="0 0 38 38"><rect x="0" y="0" width="38" height="38" fill="#0696d7"/><rect x="3.5" y="3.5" width="26" height="21" fill="none" stroke="#8ee28a" stroke-width="1.2" stroke-dasharray="3,2"/><polygon points="24,20 24,35 27.5,31.5 30.5,37 33,35.5 30,30.5 35,30" fill="#fff"/></svg>
<div class="a" style="left:1px;top:989px;width:1200px;height:1px;background:#d4d4d4;"></div>
<div class="a" style="left:1px;top:990px;width:1200px;height:49px;background:#f2f2f2;"></div>
<svg class="a" style="left:11px;top:1007px" width="14" height="15" viewBox="0 0 14 15"><rect x="0" y="0" width="2.2" height="14" fill="#474747"/><polygon points="13,0 3,7 13,14" fill="#474747"/></svg>
<svg class="a" style="left:37px;top:1007px" width="13" height="15" viewBox="0 0 13 15"><polygon points="0,7 8,0 8,14" fill="#474747"/><rect x="10" y="3.5" width="2" height="7" fill="#474747"/></svg>
<svg class="a" style="left:61px;top:1006px" width="12" height="16" viewBox="0 0 12 16"><polygon points="0,0 11,8 0,16" fill="#474747"/></svg>
<svg class="a" style="left:86px;top:1007px" width="13" height="15" viewBox="0 0 13 15"><rect x="0" y="3.5" width="2" height="7" fill="#474747"/><polygon points="4,0 12,7 4,14" fill="#474747"/></svg>
<svg class="a" style="left:111px;top:1007px" width="14" height="15" viewBox="0 0 14 15"><polygon points="0,0 10,7 0,14" fill="#474747"/><rect x="11" y="0" width="2.2" height="14" fill="#474747"/></svg>
<div class="a" style="left:145px;top:997px;width:165px;height:6px;background:#f9d16e;"></div>
<div class="a" style="left:155px;top:1029px;width:170px;height:2.5px;background:#c8c8c8;"></div>
<div class="a" style="left:155px;top:1024px;width:2px;height:6px;background:#c8c8c8;"></div>
<div class="a" style="left:179px;top:1024px;width:2px;height:6px;background:#c8c8c8;"></div>
<div class="a" style="left:203px;top:1024px;width:2px;height:6px;background:#c8c8c8;"></div>
<div class="a" style="left:227px;top:1024px;width:2px;height:6px;background:#c8c8c8;"></div>
<div class="a" style="left:251px;top:1024px;width:2px;height:6px;background:#c8c8c8;"></div>
<div class="a" style="left:275px;top:1024px;width:2px;height:6px;background:#c8c8c8;"></div>
<div class="a" style="left:299px;top:1024px;width:2px;height:6px;background:#c8c8c8;"></div>
<div class="a" style="left:323px;top:1024px;width:2px;height:6px;background:#c8c8c8;"></div>
<svg class="a" style="left:148px;top:1005px" width="18" height="17" viewBox="0 0 18 17"><g fill="#1e88e5"><rect x="0" y="0" width="2" height="2"/><rect x="12" y="0" width="2" height="2"/><rect x="0" y="13" width="2" height="2"/></g><path d="M3,0.5 H11 M0.5,3 V12 M12.5,3 V8 M3,13.5 H8" stroke="#555" stroke-width="1" fill="none"/><path d="M9,15.5 L10,12.5 L14.5,8 L16.5,10 L12,14.5z" fill="#f6b73c"/><path d="M14.5,8 L15.5,7 L17,8.5 L16.5,10z" fill="#e03a3a"/></svg>
<svg class="a" style="left:172px;top:1005px" width="17" height="18" viewBox="0 0 17 18"><path d="M0,5 L3,2 H12 V13 L9,16 H0z" fill="#64aee6"/><path d="M0,5 L3,2 H12 L9,5z" fill="#8ccaf7"/><path d="M9,5 L12,2 V13 L9,16z" fill="#3f8bcc"/><rect x="0" y="16" width="9" height="1.5" fill="#999"/><path d="M14.5,3 V14" stroke="#333" stroke-width="1"/><polygon points="14.5,0 12.5,3.5 16.5,3.5" fill="#333"/></svg>
<svg class="a" style="left:196px;top:1005px" width="18" height="17" viewBox="0 0 18 17"><g fill="#1e88e5"><rect x="0" y="0" width="2" height="2"/><rect x="12" y="0" width="2" height="2"/><rect x="0" y="13" width="2" height="2"/></g><path d="M3,0.5 H11 M0.5,3 V12 M12.5,3 V8 M3,13.5 H8" stroke="#555" stroke-width="1" fill="none"/><path d="M9,15.5 L10,12.5 L14.5,8 L16.5,10 L12,14.5z" fill="#f6b73c"/><path d="M14.5,8 L15.5,7 L17,8.5 L16.5,10z" fill="#e03a3a"/></svg>
<svg class="a" style="left:220px;top:1005px" width="17" height="18" viewBox="0 0 17 18"><path d="M0,5 L3,2 H12 V13 L9,16 H0z" fill="#64aee6"/><path d="M0,5 L3,2 H12 L9,5z" fill="#8ccaf7"/><path d="M9,5 L12,2 V13 L9,16z" fill="#3f8bcc"/><rect x="0" y="16" width="9" height="1.5" fill="#999"/><path d="M14.5,3 V14" stroke="#333" stroke-width="1"/><polygon points="14.5,0 12.5,3.5 16.5,3.5" fill="#333"/></svg>
<svg class="a" style="left:245px;top:1005px" width="16" height="17" viewBox="0 0 16 17"><g fill="#1e88e5"><rect x="11" y="1" width="4" height="4"/><rect x="11" y="12" width="4" height="4"/><rect x="1" y="12" width="4" height="4"/></g><rect x="1" y="1" width="4" height="4" fill="none" stroke="#555" stroke-width="1"/><path d="M6,3 H10 M3,6 V11 M6,14 H10 M13,6 V11" stroke="#555" stroke-width="0.8"/></svg>
<svg class="a" style="left:269px;top:1005px" width="17" height="17" viewBox="0 0 17 17"><path d="M0.5,16 V4 L4,0.5 H16 V12.5 L12.5,16z" fill="#eee" stroke="#555" stroke-width="1"/><path d="M12.5,4 L16,0.5 V12.5 L12.5,16z" fill="#bbb"/><rect x="2" y="5" width="9" height="9" fill="#ddd"/><rect x="3" y="6" width="4" height="7" fill="#3f8bcc"/><path d="M3,13 L7,9.5 H10 V13z" fill="#8ccaf7"/></svg>
<svg class="a" style="left:292px;top:1005px" width="18" height="17" viewBox="0 0 18 17"><g fill="#1e88e5"><rect x="0" y="0" width="2" height="2"/><rect x="12" y="0" width="2" height="2"/><rect x="0" y="13" width="2" height="2"/></g><path d="M3,0.5 H11 M0.5,3 V12 M12.5,3 V8 M3,13.5 H8" stroke="#555" stroke-width="1" fill="none"/><path d="M9,15.5 L10,12.5 L14.5,8 L16.5,10 L12,14.5z" fill="#f6b73c"/><path d="M14.5,8 L15.5,7 L17,8.5 L16.5,10z" fill="#e03a3a"/></svg>
<svg class="a" style="left:313px;top:1005px" width="17" height="18" viewBox="0 0 17 18"><g opacity="0.35"><path d="M0,5 L3,2 H12 V13 L9,16 H0z" fill="#64aee6"/><path d="M0,5 L3,2 H12 L9,5z" fill="#8ccaf7"/><path d="M9,5 L12,2 V13 L9,16z" fill="#3f8bcc"/><rect x="0" y="16" width="9" height="1.5" fill="#999"/><path d="M14.5,3 V14" stroke="#333" stroke-width="1"/><polygon points="14.5,0 12.5,3.5 16.5,3.5" fill="#333"/></g></svg>
<svg class="a" style="left:304px;top:999px" width="13" height="33" viewBox="0 0 13 33"><polygon points="0,0 13,0 13,3 8,8 5,8 0,3" fill="#555"/><rect x="5.4" y="6" width="2.2" height="26" fill="#555"/></svg>
<svg class="a" style="left:1170px;top:1006px" width="16" height="16" viewBox="0 0 16 16"><g fill="#8a8a8a" transform="translate(8,8)"><rect x="-1.8" y="-8" width="3.6" height="4" transform="rotate(0)"/><rect x="-1.8" y="-8" width="3.6" height="4" transform="rotate(45)"/><rect x="-1.8" y="-8" width="3.6" height="4" transform="rotate(90)"/><rect x="-1.8" y="-8" width="3.6" height="4" transform="rotate(135)"/><rect x="-1.8" y="-8" width="3.6" height="4" transform="rotate(180)"/><rect x="-1.8" y="-8" width="3.6" height="4" transform="rotate(225)"/><rect x="-1.8" y="-8" width="3.6" height="4" transform="rotate(270)"/><rect x="-1.8" y="-8" width="3.6" height="4" transform="rotate(315)"/><circle r="5.6"/></g><circle cx="8" cy="8" r="2.4" fill="#f2f2f2"/></svg>
<div id="frame"></div>
<div class="a" style="left:273px;top:0;width:96px;height:1px;background:#dcdcdc"></div><div class="a" style="left:369px;top:0;width:48px;height:1px;background:#1e7fd0"></div><div class="a" style="left:417px;top:0;width:97px;height:1px;background:#dcdcdc"></div>
</body></html>
